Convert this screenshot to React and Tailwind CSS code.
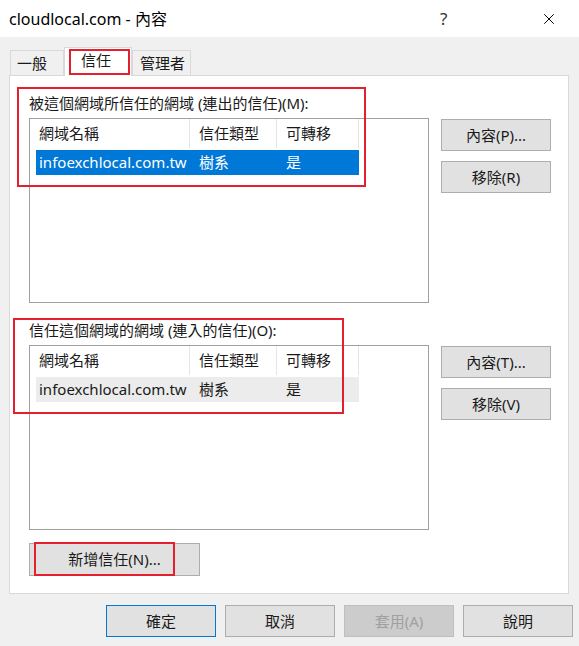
import { X } from "lucide-react";

const FONT = { fontFamily: '"Noto Sans", "Noto Sans CJK TC", sans-serif' };

const COLS = [
  { key: "name", label: "網域名稱", w: "w-[160px]" },
  { key: "type", label: "信任類型", w: "w-[87px]" },
  { key: "trans", label: "可轉移", w: "w-[82px]" },
];

function ListView({ selected }) {
  return (
    <div className="w-[400px] h-[185px] border border-[#a0a0a0] bg-white">
      <div className="flex h-[29px] items-center">
        {COLS.map(c => (
          <div key={c.key} className={`${c.w} h-full flex items-center pl-[9px] border-r border-[#e5e5e5] text-[#1a1a1a]`}>
            {c.label}
          </div>
        ))}
      </div>
      <div className={`mt-[2px] ml-[6px] w-[323px] h-[25px] flex items-center ${selected ? "bg-[#0078d7] text-white" : "bg-[#ececec] text-[#1a1a1a]"}`}>
        <div className="w-[154px] pl-[3px]">infoexchlocal.com.tw</div>
        <div className="w-[87px] pl-[9px]">樹系</div>
        <div className="pl-[9px]">是</div>
      </div>
    </div>
  );
}

function Btn({ children, className = "", disabled, primary }) {
  return (
    <div className={`flex items-center justify-center border ${primary ? "border-[#0078d7]" : "border-[#adadad]"} ${disabled ? "bg-[#cccccc] text-[#a0a0a0] border-[#bfbfbf]" : "bg-[#e1e1e1] text-[#1a1a1a]"} ${className}`}>
      {children}
    </div>
  );
}

function Section({ label, btn1, btn2, selected, mt }) {
  return (
    <div className={mt}>
      <div className="h-[20px] leading-[20px] pl-[19px] text-[#1a1a1a]">{label}</div>
      <div className="flex pl-[19px] mt-[5px]">
        <ListView selected={selected} />
        <div className="ml-[12px] mt-[1px] flex flex-col gap-[10px]">
          <Btn className="w-[110px] h-[32px]">{btn1}</Btn>
          <Btn className="w-[110px] h-[32px]">{btn2}</Btn>
        </div>
      </div>
    </div>
  );
}

export default function App() {
  return (
    <div className="relative w-[579px] h-[646px] bg-[#f0f0f0] text-[15px] overflow-hidden" style={FONT}>
      {/* title bar */}
      <div className="h-[37px] bg-white flex items-center pl-[9px] text-[16px] text-black">
        <span className="flex-1">cloudlocal.com - 內容</span>
        <span className="w-[14px] mr-[86px] text-[17px] text-[#333]">?</span>
        <X className="w-[18px] h-[18px] mr-[21px]" strokeWidth={1.3} />
      </div>

      {/* tabs */}
      <div className="flex items-end pl-[10px] h-[38px]">
        <div className="w-[54px] h-[25px] border border-b-0 border-[#d9d9d9] flex items-center pl-[6px] text-[#1a1a1a]">一般</div>
        <div className="w-[68px] h-[29px] bg-white border border-b-0 border-[#d9d9d9] relative top-[1px] flex items-center pl-[16px] pb-[3px] text-[#1a1a1a] z-10">信任</div>
        <div className="w-[59px] h-[25px] border border-b-0 border-[#d9d9d9] flex items-center pl-[7px] text-[#1a1a1a]">管理者</div>
      </div>

      {/* panel */}
      <div className="ml-[9px] w-[560px] h-[519px] bg-white border border-[#d9d9d9] pt-[17px]">
        <Section label="被這個網域所信任的網域 (連出的信任)(M):" btn1="內容(P)..." btn2="移除(R)" selected />
        <Section label="信任這個網域的網域 (連入的信任)(O):" btn1="內容(T)..." btn2="移除(V)" mt="mt-[17px]" />
        <div className="pl-[19px] mt-[13px]">
          <Btn className="w-[171px] h-[33px]">新增信任(N)...</Btn>
        </div>
      </div>

      {/* dialog buttons */}
      <div className="flex justify-end gap-[9px] pr-[6px] mt-[11px]">
        <Btn className="w-[110px] h-[32px]" primary>確定</Btn>
        <Btn className="w-[110px] h-[32px]">取消</Btn>
        <Btn className="w-[110px] h-[32px]" disabled>套用(A)</Btn>
        <Btn className="w-[110px] h-[32px]">說明</Btn>
      </div>

      {/* red annotation boxes */}
      <div className="absolute left-[69px] top-[49px] w-[61px] h-[26px] border-2 border-[#e5202e] z-20" />
      <div className="absolute left-[17px] top-[87px] w-[349px] h-[100px] border-2 border-[#e5202e]" />
      <div className="absolute left-[13px] top-[318px] w-[331px] h-[96px] border-2 border-[#e5202e]" />
      <div className="absolute left-[34px] top-[542px] w-[141px] h-[34px] border-2 border-[#e5202e]" />
    </div>
  );
}
